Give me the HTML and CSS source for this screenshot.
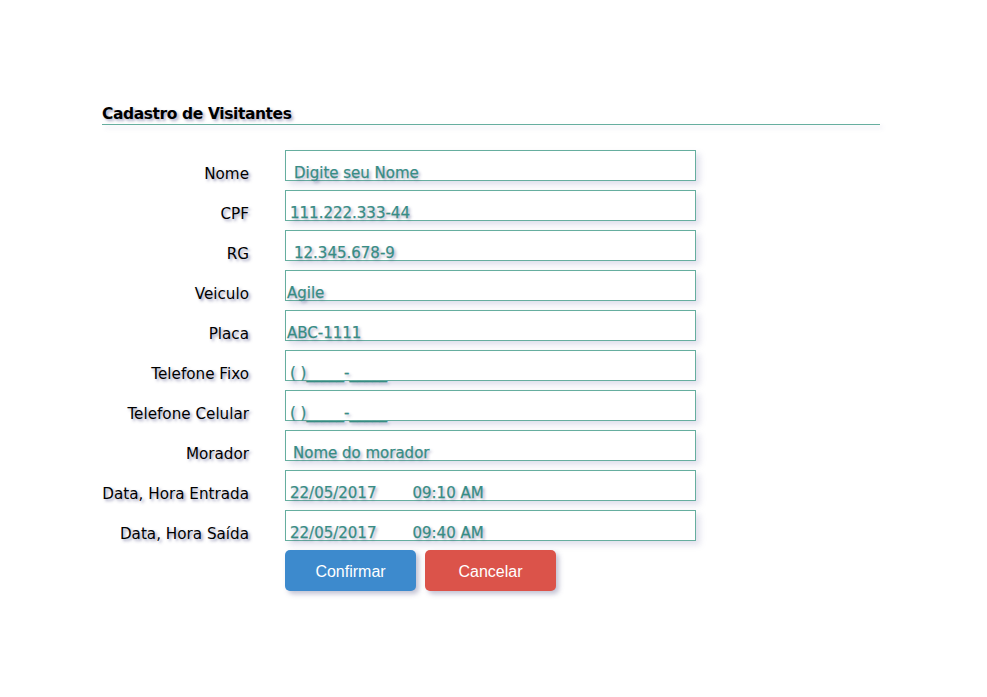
FILE: index.html
```html
<!DOCTYPE html>
<html lang="pt-BR">
<head>
<meta charset="utf-8">
<title>Cadastro de Visitantes</title>
<link rel="stylesheet" href="styles.css">
</head>
<body>
<div class="page">
  <h1 class="title">Cadastro de Visitantes</h1>
  <form class="form">
    <label class="lbl">Nome</label>
    <div class="field pad-l"><span class="val">Digite seu Nome</span></div>

    <label class="lbl">CPF</label>
    <div class="field"><span class="val">111.222.333-44</span></div>

    <label class="lbl">RG</label>
    <div class="field pad-l"><span class="val">12.345.678-9</span></div>

    <label class="lbl">Veiculo</label>
    <div class="field pad-s"><span class="val">Agile</span></div>

    <label class="lbl">Placa</label>
    <div class="field pad-s"><span class="val">ABC-1111</span></div>

    <label class="lbl">Telefone Fixo</label>
    <div class="field"><span class="val">( )_____-_____</span></div>

    <label class="lbl">Telefone Celular</label>
    <div class="field"><span class="val">( )_____-_____</span></div>

    <label class="lbl">Morador</label>
    <div class="field pad-m"><span class="val">Nome do morador</span></div>

    <label class="lbl">Data, Hora Entrada</label>
    <div class="field"><span class="val">22/05/2017</span><span class="val time">09:10 AM</span></div>

    <label class="lbl">Data, Hora Saída</label>
    <div class="field"><span class="val">22/05/2017</span><span class="val time">09:40 AM</span></div>

    <div class="actions">
      <button type="button" class="btn btn-primary">Confirmar</button>
      <button type="button" class="btn btn-danger">Cancelar</button>
    </div>
  </form>
</div>
</body>
</html>
```
FILE: styles.css
```css
html, body {
  margin: 0;
  padding: 0;
  background: #ffffff;
}

.page {
  padding: 105px 0 0 102px;
  font-family: "DejaVu Sans", Verdana, sans-serif;
}

.title {
  width: 778px;
  margin: 0;
  padding: 0 0 1px 0;
  font-size: 15.5px;
  letter-spacing: -0.4px;
  font-weight: bold;
  line-height: 18px;
  color: #000;
  text-shadow: 2px 2px 3px rgba(70, 70, 130, 0.45);
}

.title::after {
  content: "";
  display: block;
  height: 1px;
  margin-top: 1px;
  background: #66ae9f;
  box-shadow: 3px 3px 4px rgba(120, 120, 170, 0.25);
}

.form {
  display: grid;
  grid-template-columns: 148px 411px;
  grid-auto-rows: 31px;
  column-gap: 35px;
  row-gap: 9px;
  margin-top: 24px;
  align-items: end;
}

.lbl {
  text-align: right;
  font-size: 15.2px;
  line-height: 17px;
  color: #000;
  white-space: nowrap;
  margin-bottom: -2px;
  padding-right: 1px;
  text-shadow: 2px 2px 3px rgba(60, 60, 120, 0.5);
}

.field {
  height: 31px;
  box-sizing: border-box;
  border: 1px solid #66ae9f;
  display: flex;
  align-items: flex-end;
  padding-left: 4px;
  box-shadow: 4px 4px 6px rgba(120, 120, 175, 0.22);
}

.pad-s { padding-left: 1px; }
.pad-m { padding-left: 7px; }
.pad-l { padding-left: 8px; }

.val {
  font-size: 15px;
  line-height: 17px;
  margin-bottom: -2px;
  color: #388c84;
  white-space: pre;
  -webkit-text-stroke: 0.25px #388c84;
  text-shadow: 2px 2px 3px rgba(60, 60, 120, 0.45);
}

.time {
  margin-left: 36px;
}

.actions {
  grid-column: 2;
  grid-row: span 2;
  align-self: start;
  display: flex;
  gap: 9px;
}

.btn {
  width: 131px;
  height: 41px;
  border: none;
  border-radius: 5px;
  font-family: "Liberation Sans", Arial, sans-serif;
  font-size: 16px;
  color: #ffffff;
  padding: 2px 0 0 0;
  box-shadow: 3px 3px 5px rgba(80, 80, 130, 0.35);
  cursor: pointer;
}

.btn-primary { background: #3d8acd; }
.btn-danger { background: #db534a; }
```
